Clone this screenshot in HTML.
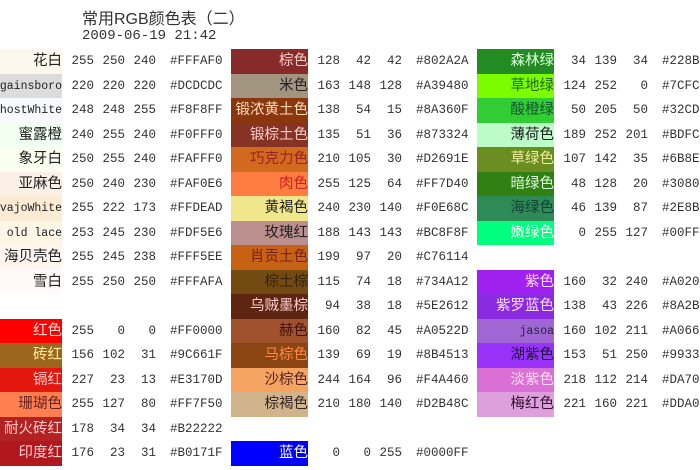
<!DOCTYPE html>
<html><head><meta charset="utf-8"><style>
body{margin:0;width:700px;height:470px;background:#fff;position:relative;overflow:hidden;font-family:"Liberation Mono","DejaVu Sans Mono",monospace;color:#333}
.t{position:absolute;left:82px;font-family:"Liberation Serif","Noto Serif CJK SC",serif;color:#333}
.r{position:absolute;height:24.5px;width:0}
.r span{position:absolute;top:0;height:24.5px;line-height:25px;font-size:12.5px;white-space:nowrap}
.r span.sw{right:0;display:flex;justify-content:flex-end;font-family:"Liberation Sans","Noto Sans CJK SC",sans-serif;font-size:14.5px;overflow:hidden}
.r span.e{font-family:"Liberation Mono",monospace;font-size:11.5px}
.a{left:0;width:32px;text-align:right}
.b{left:32px;width:31px;text-align:right}
.c{left:63px;width:31px;text-align:right}
.h{left:108px}
.g1{left:62px}.g1 .sw{width:62px}
.g2{left:308px}.g2 .sw{width:77px}
.g3{left:554px}.g3 .sw{width:77px}
</style></head><body>
<div class="t" style="top:5px;font-size:16px;font-family:'Liberation Sans','Noto Sans CJK SC',sans-serif">常用RGB颜色表（二）</div>
<div class="t" style="top:28px;font-size:14px;font-family:'Liberation Mono',monospace">2009-06-19 21:42</div>

<div class="r g1" style="top:49px"><span class="sw" style="background:#fdf8ee;color:#222">花白</span><span class="a">255</span><span class="b">250</span><span class="c">240</span><span class="h">#FFFAF0</span></div>
<div class="r g1" style="top:73.5px"><span class="sw e" style="background:#dcdcdc;color:#222">gainsboro</span><span class="a">220</span><span class="b">220</span><span class="c">220</span><span class="h">#DCDCDC</span></div>
<div class="r g1" style="top:98px"><span class="sw e" style="background:#f8f8ff;color:#222">ghostWhite</span><span class="a">248</span><span class="b">248</span><span class="c">255</span><span class="h">#F8F8FF</span></div>
<div class="r g1" style="top:122.5px"><span class="sw" style="background:#f0fff0;color:#222">蜜露橙</span><span class="a">240</span><span class="b">255</span><span class="c">240</span><span class="h">#F0FFF0</span></div>
<div class="r g1" style="top:147px"><span class="sw" style="background:#fafff0;color:#222">象牙白</span><span class="a">250</span><span class="b">255</span><span class="c">240</span><span class="h">#FAFFF0</span></div>
<div class="r g1" style="top:171.5px"><span class="sw" style="background:#faf0e6;color:#222">亚麻色</span><span class="a">250</span><span class="b">240</span><span class="c">230</span><span class="h">#FAF0E6</span></div>
<div class="r g1" style="top:196px"><span class="sw e" style="background:#fdecd4;color:#222">navajoWhite</span><span class="a">255</span><span class="b">222</span><span class="c">173</span><span class="h">#FFDEAD</span></div>
<div class="r g1" style="top:220.5px"><span class="sw e" style="background:#fdf5e6;color:#222">old lace</span><span class="a">253</span><span class="b">245</span><span class="c">230</span><span class="h">#FDF5E6</span></div>
<div class="r g1" style="top:245px"><span class="sw" style="background:#fff5ee;color:#222">海贝壳色</span><span class="a">255</span><span class="b">245</span><span class="c">238</span><span class="h">#FFF5EE</span></div>
<div class="r g1" style="top:269.5px"><span class="sw" style="background:#fffafa;color:#222">雪白</span><span class="a">255</span><span class="b">250</span><span class="c">250</span><span class="h">#FFFAFA</span></div>
<div class="r g1" style="top:318.5px"><span class="sw" style="background:#ff0000;color:#fdd">红色</span><span class="a">255</span><span class="b">0</span><span class="c">0</span><span class="h">#FF0000</span></div>
<div class="r g1" style="top:343px"><span class="sw" style="background:#9c661f;color:#fe9">砖红</span><span class="a">156</span><span class="b">102</span><span class="c">31</span><span class="h">#9C661F</span></div>
<div class="r g1" style="top:367.5px"><span class="sw" style="background:#e3170d;color:#fcc">镉红</span><span class="a">227</span><span class="b">23</span><span class="c">13</span><span class="h">#E3170D</span></div>
<div class="r g1" style="top:392px"><span class="sw" style="background:#ff7f50;color:#622">珊瑚色</span><span class="a">255</span><span class="b">127</span><span class="c">80</span><span class="h">#FF7F50</span></div>
<div class="r g1" style="top:416.5px"><span class="sw" style="background:#b22222;color:#fcc">耐火砖红</span><span class="a">178</span><span class="b">34</span><span class="c">34</span><span class="h">#B22222</span></div>
<div class="r g1" style="top:441px"><span class="sw" style="background:#b0171f;color:#fcc">印度红</span><span class="a">176</span><span class="b">23</span><span class="c">31</span><span class="h">#B0171F</span></div>

<div class="r g2" style="top:49px"><span class="sw" style="background:#862a2a;color:#fcc">棕色</span><span class="a">128</span><span class="b">42</span><span class="c">42</span><span class="h">#802A2A</span></div>
<div class="r g2" style="top:73.5px"><span class="sw" style="background:#a39480;color:#222">米色</span><span class="a">163</span><span class="b">148</span><span class="c">128</span><span class="h">#A39480</span></div>
<div class="r g2" style="top:98px"><span class="sw" style="background:#8a360f;color:#fdb">锻浓黄土色</span><span class="a">138</span><span class="b">54</span><span class="c">15</span><span class="h">#8A360F</span></div>
<div class="r g2" style="top:122.5px"><span class="sw" style="background:#873324;color:#fcc">锻棕土色</span><span class="a">135</span><span class="b">51</span><span class="c">36</span><span class="h">#873324</span></div>
<div class="r g2" style="top:147px"><span class="sw" style="background:#d2691e;color:#922">巧克力色</span><span class="a">210</span><span class="b">105</span><span class="c">30</span><span class="h">#D2691E</span></div>
<div class="r g2" style="top:171.5px"><span class="sw" style="background:#ff7d40;color:#c22">肉色</span><span class="a">255</span><span class="b">125</span><span class="c">64</span><span class="h">#FF7D40</span></div>
<div class="r g2" style="top:196px"><span class="sw" style="background:#f0e68c;color:#222">黄褐色</span><span class="a">240</span><span class="b">230</span><span class="c">140</span><span class="h">#F0E68C</span></div>
<div class="r g2" style="top:220.5px"><span class="sw" style="background:#bc8f8f;color:#222">玫瑰红</span><span class="a">188</span><span class="b">143</span><span class="c">143</span><span class="h">#BC8F8F</span></div>
<div class="r g2" style="top:245px"><span class="sw" style="background:#c76114;color:#722">肖贡土色</span><span class="a">199</span><span class="b">97</span><span class="c">20</span><span class="h">#C76114</span></div>
<div class="r g2" style="top:269.5px"><span class="sw" style="background:#734a12;color:#321">棕土棕</span><span class="a">115</span><span class="b">74</span><span class="c">18</span><span class="h">#734A12</span></div>
<div class="r g2" style="top:294px"><span class="sw" style="background:#5e2612;color:#fcc">乌贼墨棕</span><span class="a">94</span><span class="b">38</span><span class="c">18</span><span class="h">#5E2612</span></div>
<div class="r g2" style="top:318.5px"><span class="sw" style="background:#a0522d;color:#411">赫色</span><span class="a">160</span><span class="b">82</span><span class="c">45</span><span class="h">#A0522D</span></div>
<div class="r g2" style="top:343px"><span class="sw" style="background:#8b4513;color:#f84">马棕色</span><span class="a">139</span><span class="b">69</span><span class="c">19</span><span class="h">#8B4513</span></div>
<div class="r g2" style="top:367.5px"><span class="sw" style="background:#f4a460;color:#522">沙棕色</span><span class="a">244</span><span class="b">164</span><span class="c">96</span><span class="h">#F4A460</span></div>
<div class="r g2" style="top:392px"><span class="sw" style="background:#d2b48c;color:#322">棕褐色</span><span class="a">210</span><span class="b">180</span><span class="c">140</span><span class="h">#D2B48C</span></div>
<div class="r g2" style="top:441px"><span class="sw" style="background:#0000ff;color:#fff">蓝色</span><span class="a">0</span><span class="b">0</span><span class="c">255</span><span class="h">#0000FF</span></div>

<div class="r g3" style="top:49px"><span class="sw" style="background:#228b22;color:#dfd">森林绿</span><span class="a">34</span><span class="b">139</span><span class="c">34</span><span class="h">#228B22</span></div>
<div class="r g3" style="top:73.5px"><span class="sw" style="background:#7cfc00;color:#262">草地绿</span><span class="a">124</span><span class="b">252</span><span class="c">0</span><span class="h">#7CFC00</span></div>
<div class="r g3" style="top:98px"><span class="sw" style="background:#32cd32;color:#153">酸橙绿</span><span class="a">50</span><span class="b">205</span><span class="c">50</span><span class="h">#32CD32</span></div>
<div class="r g3" style="top:122.5px"><span class="sw" style="background:#bdfcc9;color:#222">薄荷色</span><span class="a">189</span><span class="b">252</span><span class="c">201</span><span class="h">#BDFCC9</span></div>
<div class="r g3" style="top:147px"><span class="sw" style="background:#6b8e23;color:#ee9">草绿色</span><span class="a">107</span><span class="b">142</span><span class="c">35</span><span class="h">#6B8E23</span></div>
<div class="r g3" style="top:171.5px"><span class="sw" style="background:#308014;color:#dfd">暗绿色</span><span class="a">48</span><span class="b">128</span><span class="c">20</span><span class="h">#308014</span></div>
<div class="r g3" style="top:196px"><span class="sw" style="background:#2e8b57;color:#143">海绿色</span><span class="a">46</span><span class="b">139</span><span class="c">87</span><span class="h">#2E8B57</span></div>
<div class="r g3" style="top:220.5px"><span class="sw" style="background:#00ff7f;color:#fff">嫩绿色</span><span class="a">0</span><span class="b">255</span><span class="c">127</span><span class="h">#00FF7F</span></div>
<div class="r g3" style="top:269.5px"><span class="sw" style="background:#a020f0;color:#fdf">紫色</span><span class="a">160</span><span class="b">32</span><span class="c">240</span><span class="h">#A020F0</span></div>
<div class="r g3" style="top:294px"><span class="sw" style="background:#8a2be2;color:#fdf">紫罗蓝色</span><span class="a">138</span><span class="b">43</span><span class="c">226</span><span class="h">#8A2BE2</span></div>
<div class="r g3" style="top:318.5px"><span class="sw e" style="background:#a066d3;color:#224">jasoa</span><span class="a">160</span><span class="b">102</span><span class="c">211</span><span class="h">#A066D3</span></div>
<div class="r g3" style="top:343px"><span class="sw" style="background:#9933fa;color:#214">湖紫色</span><span class="a">153</span><span class="b">51</span><span class="c">250</span><span class="h">#9933FA</span></div>
<div class="r g3" style="top:367.5px"><span class="sw" style="background:#da70d6;color:#fde">淡紫色</span><span class="a">218</span><span class="b">112</span><span class="c">214</span><span class="h">#DA70D6</span></div>
<div class="r g3" style="top:392px"><span class="sw" style="background:#dda0dd;color:#313">梅红色</span><span class="a">221</span><span class="b">160</span><span class="c">221</span><span class="h">#DDA0DD</span></div>
</body></html>
